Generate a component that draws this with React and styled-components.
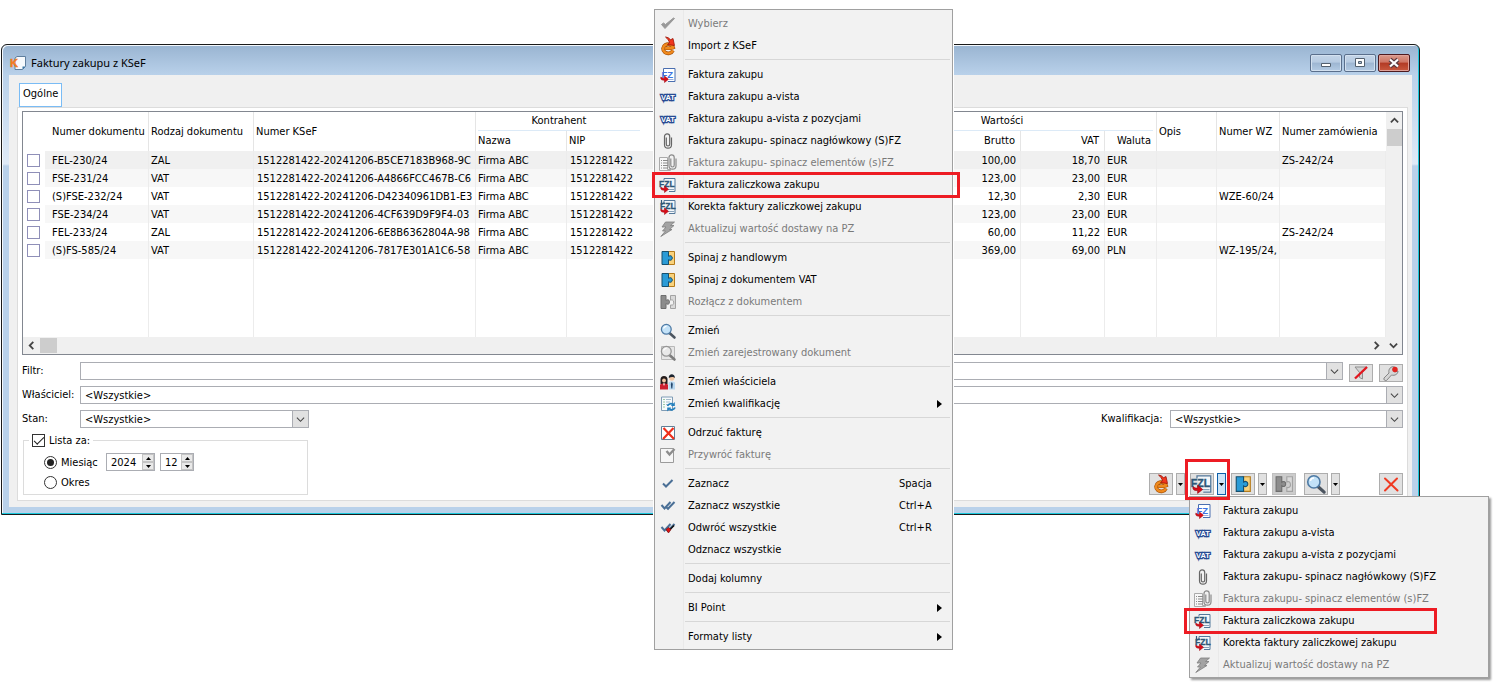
import { useState } from "react";
import styled, { createGlobalStyle } from "styled-components";

const GlobalStyle = createGlobalStyle`
  * {
    box-sizing: border-box;
  }

  body {
    margin: 0;
    background: #fff;
    color: #000;
  }

  body,
  button,
  input,
  select {
    font-family: "DejaVu Sans Condensed", "Noto Sans", sans-serif;
    font-size: 11px;
    line-height: 14px;
  }
`;

const Page = styled.div`
  position: relative;
  min-height: 100vh;
  padding: 44px 74px 0 1px;
`;

const Window = styled.div`
  border: 1px solid #1a1a1a;
  border-radius: 6px 6px 0 0;
  box-shadow: inset -1px -1px 0 #19c8dc, inset 1px 1px 0 #f4f8fc;
  background: linear-gradient(#99b4d1 0, #b9d1ea 30px, #dfeaf7 119px, #b9d1ea 121px);
  padding: 0 7px 7px;
`;

const TitleBar = styled.div`
  display: flex;
  align-items: center;
  gap: 4px;
  height: 30px;
  padding: 6px 2px 0;
`;

const Title = styled.h1`
  flex: 1;
  margin: 0;
  font-size: 11px;
  font-weight: 400;
  font-family: "Noto Sans", sans-serif;
`;

const WindowButtons = styled.div`
  display: flex;
  gap: 2px;
`;

const WindowButton = styled.button`
  display: flex;
  align-items: center;
  justify-content: center;
  width: 32px;
  height: 18px;
  padding: 0;
  border: 1px solid ${(props) => (props.$close ? "#4d1a1f" : "#5a6f8c")};
  border-radius: 2px;
  box-shadow: inset 0 0 0 1px ${(props) => (props.$close ? "#e0a199" : "#d3e1f0")};
  background: ${(props) =>
    props.$close
      ? "linear-gradient(#d99a8c 0, #cf7463 45%, #b23a24 50%, #c9593f 100%)"
      : "linear-gradient(#c4d5e8 0, #b7cbe2 45%, #9db6d2 50%, #b4cbe4 100%)"};
`;

const Content = styled.div`
  background: #f0f0f0;
  padding: 8px 4px 6px 8px;
`;

const Tab = styled.button`
  display: block;
  height: 24px;
  margin-left: 2px;
  padding: 0 3px 3px;
  border: 1px solid #7abcf5;
  background: #fff;
`;

const Panel = styled.div`
  border: 1px solid #dcdcdc;
  background: #fff;
  padding: 3px 4px 5px;
`;

const Grid = styled.div`
  border: 1px solid #828790;
  background: #fff;
`;

const GridBody = styled.div`
  display: flex;
`;

const Table = styled.table`
  flex: 1;
  width: 0;
  table-layout: fixed;
  border-collapse: separate;
  border-spacing: 0;
`;

const Th = styled.th`
  height: ${(props) => (props.$group ? "19px" : "20px")};
  padding: 0 5px 0 ${(props) => props.$left || 2}px;
  border-right: 1px solid ${(props) => (props.$open ? "transparent" : "#e5e5e5")};
  font-weight: 400;
  text-align: ${(props) => props.$align || "left"};
  white-space: nowrap;
`;

const GroupTitle = styled.div`
  height: 19px;
  line-height: 18px;
  border-bottom: 1px solid #dceaf7;
  margin-right: -2px;
`;

const Td = styled.td`
  height: 18px;
  padding: 2px ${(props) => (props.$align ? 4 : 0)}px 0 ${(props) => props.$left || 2}px;
  border-right: 1px solid ${(props) => (props.$open ? "transparent" : "#ececec")};
  background: ${(props) => props.$bg || "#fff"};
  text-align: ${(props) => props.$align || "left"};
  white-space: nowrap;
  overflow: hidden;
`;

const FillTd = styled(Td)`
  height: 78px;
`;

const CheckTd = styled.td`
  padding: 0 0 0 4px;
`;

const RowCheck = styled.input`
  appearance: none;
  display: block;
  width: 13px;
  height: 13px;
  margin: 0;
  border: 1px solid #8f8fb8;
  background: #fff;

  &:checked {
    background: #8f8fb8;
  }
`;

const ScrollColumn = styled.div`
  display: flex;
  flex-direction: column;
  align-items: center;
  width: 16px;
  background: #f0f0f0;
`;

const ScrollRow = styled.div`
  display: flex;
  align-items: center;
  height: 17px;
  background: #f0f0f0;
`;

const ScrollButton = styled.button`
  display: flex;
  align-items: center;
  justify-content: center;
  width: 17px;
  height: 17px;
  padding: 0;
  border: none;
  background: transparent;
`;

const Thumb = styled.div`
  width: ${(props) => (props.$wide ? 17 : 15)}px;
  height: ${(props) => (props.$wide ? 15 : 17)}px;
  background: #cdcdcd;
`;

const Spacer = styled.div`
  flex: 1;
`;

const Form = styled.div`
  display: flex;
  flex-direction: column;
  gap: 6px;
  margin-top: 7px;
`;

const FormRow = styled.div`
  display: flex;
  gap: 6px;
  height: 18px;
`;

const Field = styled.div`
  display: flex;
  flex: ${(props) => (props.$width ? "none" : 1)};
`;

const FieldLabel = styled.label`
  width: ${(props) => props.$width}px;
  line-height: 17px;
`;

const Combo = styled.div`
  display: grid;
  grid-template-columns: 1fr 17px;
  flex: ${(props) => (props.$width ? "none" : 1)};
  width: ${(props) => (props.$width ? props.$width + "px" : "auto")};
  height: 18px;
`;

const Select = styled.select`
  appearance: none;
  grid-area: 1 / 1 / 2 / 3;
  min-width: 0;
  height: 18px;
  padding: 1px 20px 0 4px;
  border: 1px solid #abadb3;
  border-radius: 0;
  background: #fff;
  color: #000;
`;

const ComboArrow = styled.span`
  grid-area: 1 / 2;
  display: flex;
  align-items: center;
  justify-content: center;
  border: 1px solid #abadb3;
  background: #e1e1e1;
  pointer-events: none;
`;

const ToolButton = styled.button`
  display: flex;
  align-items: center;
  justify-content: center;
  width: 24px;
  height: ${(props) => (props.$small ? 18 : 22)}px;
  margin: ${(props) => (props.$small ? "2px 0 0" : "0")};
  padding: 0;
  border: 1px solid ${(props) => (props.disabled ? "#bfbfbf" : "#adadad")};
  background: ${(props) => (props.disabled ? "#cccccc" : "#e1e1e1")};
`;

const DropButton = styled(ToolButton)`
  width: 9px;
  border-color: ${(props) => (props.$active ? "#0e5fa8" : "#adadad")};
  background: ${(props) => (props.$active ? "#cce4f7" : "#e1e1e1")};
`;

const Footer = styled.div`
  display: flex;
  justify-content: space-between;
  align-items: flex-end;
  margin-top: 6px;
`;

const Period = styled.fieldset`
  width: 285px;
  margin: 0 0 0 1px;
  padding: 6px 0 3px 20px;
  border: 1px solid #dcdcdc;
`;

const Legend = styled.legend`
  margin-left: -15px;
  padding: 0 3px;
  height: 13px;
`;

const OptionLabel = styled.label`
  display: flex;
  align-items: center;
  gap: 4px;
  width: ${(props) => (props.$width ? props.$width + "px" : "auto")};
  height: ${(props) => props.$height || 20}px;
`;

const OptionRow = styled.div`
  display: flex;
  align-items: center;
  gap: 5px;
  height: 18px;

  & + & {
    margin-top: 2px;
  }
`;

const OptionText = styled.span`
  padding-top: 2px;
`;

const CheckBox = styled.input`
  appearance: none;
  display: grid;
  place-items: center;
  width: 13px;
  height: 13px;
  margin: 0;
  border: 1px solid #333;
  background: #fff;

  &:checked::before {
    content: "";
    width: 9px;
    height: 4px;
    margin-top: -3px;
    border-left: 1px solid #222;
    border-bottom: 1px solid #222;
    transform: rotate(-45deg);
  }
`;

const Radio = styled(CheckBox)`
  border-radius: 50%;

  &:checked::before {
    width: 7px;
    height: 7px;
    margin: 0;
    border: none;
    border-radius: 50%;
    background: #222;
    transform: none;
  }
`;

const SpinBox = styled.div`
  display: flex;
  width: ${(props) => props.$width}px;
  height: 18px;
  border: 1px solid #abadb3;
  background: #fff;
`;

const SpinInput = styled.input`
  appearance: textfield;
  flex: 1;
  width: 0;
  padding: 2px 0 0 4px;
  border: none;
  background: transparent;

  &::-webkit-inner-spin-button {
    appearance: none;
    margin: 0;
  }
`;

const SpinButtons = styled.div`
  display: flex;
  flex-direction: column;
  width: 12px;
`;

const SpinButton = styled.button`
  display: flex;
  align-items: center;
  justify-content: center;
  height: 8px;
  padding: 0;
  border: 1px solid #c4c4c4;
  background: #e9e9e9;
`;

const Toolbar = styled.div`
  display: flex;
  gap: 5px;
`;

const Split = styled.div`
  display: flex;
  gap: 3px;
  position: relative;
  margin-left: ${(props) => (props.$apart ? 3 : 0)}px;
`;

const CloseSlot = styled.div`
  margin-left: 34px;
`;

const ButtonMark = styled.div`
  position: absolute;
  z-index: 3;
  top: -14px;
  left: -5px;
  width: 45px;
  height: 41px;
  border: 3px solid #ed1c24;
  pointer-events: none;
`;

const Menu = styled.ul`
  position: absolute;
  z-index: 2;
  width: 299px;
  margin: 0;
  padding: 2px;
  border: 1px solid #a0a0a0;
  background: linear-gradient(to right, #f1f1f1 28px, #e9e9e9 28px, #e9e9e9 29px, #f2f2f2 29px);
  list-style: none;
`;

const ContextMenu = styled(Menu)`
  top: 9px;
  left: 654px;
  box-shadow: 0 0 0 1px #fff;
`;

const DropMenu = styled(Menu)`
  top: 23px;
  left: -1px;
  width: 300px;
  box-shadow: 2px 2px 2px rgba(0, 0, 0, 0.4);
`;

const MenuItem = styled.li`
  position: relative;
`;

const MenuButton = styled.button`
  display: grid;
  grid-template-columns: 16px 1fr auto 10px;
  column-gap: 12px;
  align-items: center;
  width: 100%;
  height: 22px;
  padding: 2px 3px 0;
  border: none;
  background: transparent;
  color: ${(props) => (props.disabled ? "#7a7a7a" : "#000")};
  text-align: left;
  white-space: nowrap;

  &:hover:enabled {
    background: #cfe4f7;
  }
`;

const Shortcut = styled.span`
  width: 40px;
  margin-right: -14px;
`;

const IconSlot = styled.span`
  display: flex;
  justify-content: center;
  line-height: 0;
`;

const Separator = styled.li`
  height: 7px;
  padding-top: 3px;
  padding-left: 28px;

  &::before {
    content: "";
    display: block;
    height: 1px;
    background: #d7d7d7;
  }
`;

const ItemMark = styled.div`
  position: absolute;
  z-index: 3;
  top: -1px;
  left: ${(props) => (props.$wide ? -5 : -8)}px;
  width: ${(props) => (props.$wide ? 308 : 253)}px;
  height: 26px;
  border: 3px solid #ed1c24;
  pointer-events: none;
`;

/* ---- icons ---- */

const Svg = ({ size = 16, children }) => (
  <svg width={size} height={size} viewBox="0 0 16 16" fill="none" overflow="visible" aria-hidden="true">
    {children}
  </svg>
);

const Chevron = ({ dir = "down", color = "#444", width = 1.2 }) => {
  const paths = {
    down: "M1 3l4 4 4-4",
    up: "M1 7l4-4 4 4",
    left: "M7 1L3 5l4 4",
    right: "M3 1l4 4-4 4",
  };
  return (
    <svg width="9" height="9" viewBox="0 0 10 10" fill="none" aria-hidden="true">
      <path d={paths[dir]} stroke={color} strokeWidth={width} />
    </svg>
  );
};

const Caret = ({ dir = "down" }) => {
  const paths = { down: "M0 0h5L2.5 3z", up: "M0 3h5L2.5 0z" };
  return (
    <svg width="5" height="3" viewBox="0 0 5 3" aria-hidden="true">
      <path d={paths[dir]} fill="#000" />
    </svg>
  );
};

const SubmenuArrow = () => (
  <svg width="5" height="8" viewBox="0 0 5 8" aria-hidden="true">
    <path d="M0 0v8l5-4z" fill="#000" />
  </svg>
);

const AppIcon = () => (
  <Svg>
    <path d="M6 1.500h8.500v10l-3 3H4V3z" fill="#f6fafd" stroke="#5f7f9e" />
    <path d="M14.500 11.500h-3v3z" fill="#3b79a8" />
    <text x="-1" y="12" fontSize="11" fontWeight="700" fontFamily="Liberation Sans, sans-serif" fill="#f47b20" stroke="#f47b20" strokeWidth=".5">K</text>
  </Svg>
);

const Tick = ({ color }) => (
  <Svg>
    <path d="M1.500 8.500l3.500 4L14.500 2.500l-1-.5L5.500 8.500 3.500 7z" fill={color} stroke={color} />
  </Svg>
);

const SmallTick = () => (
  <Svg>
    <path d="M3 7.500l3 3 6.500-6.500" stroke="#4a6f96" strokeWidth="2" />
  </Svg>
);

const DoubleTick = ({ red }) => (
  <Svg>
    <path d="M1.500 7l3 3.500 6-6.500M6 9l2 1.800L14.500 4" stroke="#4a6f96" strokeWidth="2" />
    {red && (
      <>
        <path d="M8 11.500l6-6" stroke="#111" strokeWidth="1.600" />
        <path d="M6 9.500l2.500-2 2.500 2-2.500 3.500z" fill="#e01212" stroke="#6d0a0a" strokeWidth=".6" />
      </>
    )}
  </Svg>
);

const ImportIcon = ({ size }) => (
  <Svg size={size}>
    <path d="M13 12.500A5.200 4.600 0 1 1 13.200 9.500c-2 .7-5 .9-8 .7" stroke="#a34d05" strokeWidth="3.600" />
    <path d="M13 12.500A5.200 4.600 0 1 1 13.200 9.500c-2 .7-5 .9-8 .7" stroke="#f08a1d" strokeWidth="2.400" />
    <path d="M5.500-1c2 .2 4 1.200 5 2.800l2.500-1.300 1.500 7L7.500 6.500l2-1.700C9 2.500 7.500.8 5.500-1z" fill="#f1371e" stroke="#9c1408" strokeWidth=".8" />
  </Svg>
);

const RedArrow = () => (
  <path d="M.8 10v1.800c.5 1.200 1.700 1.500 3.700 1.400V15.500L8.500 12.300 4.500 9v2.200C3 11.300 2 11.200.8 10z" fill="#d90b17" stroke="#98000a" strokeWidth=".5" />
);

const FzIcon = () => (
  <Svg>
    <path d="M3.500 8V1.500H15v13H8" fill="#fff" stroke="#4a6fb0" />
    <path d="M9 12.500h4.500" stroke="#9ab0dc" />
    <text x="1.500" y="10.500" fontSize="9.500" fontWeight="700" fontFamily="Liberation Sans, sans-serif" fill="#3d73e0">FZ</text>
    <RedArrow />
  </Svg>
);

const FzlIcon = ({ size, correction }) => (
  <Svg size={size}>
    <path d="M4 3.500V1.500h11v13H9" fill="#f4f7fa" stroke="#54789a" />
    <path d="M8 12.500h6" stroke="#8aa3ba" />
    <text x={correction ? 0 : -1} y="10.300" fontSize="8.500" fontWeight="700" fontFamily="Liberation Sans, sans-serif" fill="#2f5878" stroke="#2f5878" strokeWidth=".3">FZL</text>
    {correction && <path d="M1.500 1v4.500l3-2" stroke="#2f5878" strokeWidth="1.200" />}
    <RedArrow />
  </Svg>
);

const VatIcon = () => (
  <Svg>
    <text x="8" y="11" textAnchor="middle" fontSize="7.500" fontWeight="700" fontFamily="Liberation Sans, sans-serif" fill="#fff" stroke="#274b94" strokeWidth="2.400" paintOrder="stroke">
      VAT
    </text>
  </Svg>
);

const ClipPath = ({ color }) => (
  <path d="M6.300 4.500v6.800a1.700 1.700 0 0 0 3.400 0V3.500a2.600 2.600 0 0 0-5.200 0v8.200a3.500 3.500 0 0 0 7 0V4.500" stroke={color} strokeWidth="1.200" />
);

const ClipIcon = () => (
  <Svg>
    <ClipPath color="#666" />
  </Svg>
);

const ClipListIcon = () => (
  <Svg>
    <path d="M-.5 2.500h8v12h3v1h-11z" fill="#f7f7f7" stroke="#aaa" />
    <path d="M1 5.500h1M3 5.500h5M1 8h1M3 8h5M1 10.500h1M3 10.500h5M1 13h1M3 13h5" stroke="#8a8a8a" />
    <g transform="translate(4.500 -1)">
      <ClipPath color="#8a8a8a" />
    </g>
  </Svg>
);

const BoltIcon = () => (
  <Svg>
    <path d="M5.500 1h9l-4 3.500h3.500L9.500 8.500H12L.8 15.500 5.500 10H2.500L6 6H2z" fill="#a3a3a3" stroke="#7d7d7d" strokeWidth=".8" />
  </Svg>
);

const PuzzleIcon = ({ size, gray }) => (
  <Svg size={size}>
    {gray ? (
      <>
        <path d="M1 1.500h5V6.500C8 5 9.500 6 9.500 8S8 11 6 9.500v5H1z" fill="#8c8c8c" stroke="#6e6e6e" />
        <path d="M10.500 1.500h5v13h-5v-3.500c3 .8 3.500-1.500 3.200-3-.3-2-1.700-2.500-3.200-1.800z" fill="#d9d9d9" stroke="#a3a3a3" />
      </>
    ) : (
      <>
        <path d="M8 1.500h6.500v13H8z" fill="#f9d27c" stroke="#b57c1c" />
        <path d="M2 1.500h6.500v4.800C10.500 5 12.300 6 12.300 8s-1.800 3-3.800 1.700v4.800H2z" fill="#2a9bd6" stroke="#17506f" />
      </>
    )}
  </Svg>
);

const LensIcon = ({ size, gray }) => (
  <Svg size={size}>
    {gray && <path d="M1.500 1.500h13v13h-13z" fill="#e6e6e6" stroke="#b8b8b8" />}
    <path d="M9.500 10l5 4.500" stroke={gray ? "#7c7c7c" : "#4c5560"} strokeWidth="2.600" strokeLinecap="round" />
    <circle cx="6.300" cy="6.300" r="4.900" fill={gray ? "#e9e9e9" : "#c3e2f8"} stroke={gray ? "#969696" : "#4f7ba5"} strokeWidth="1.300" />
    <path d="M3.500 5.500a3 3 0 0 1 3-2.200" stroke="#fff" strokeWidth="1.200" />
  </Svg>
);

const PeopleIcon = () => (
  <Svg>
    <path d="M.5 10V5.500a3.500 3.500 0 0 1 7 0V10z" fill="#241b1b" />
    <circle cx="4" cy="6.500" r="1.900" fill="#f2c7a4" />
    <path d="M0 15.500V11c0-2 8-2 8 0v4.500z" fill="#cc1f2f" />
    <path d="M3 9.500l1 2.500 1-2.500z" fill="#fff" />
    <circle cx="11.800" cy="4" r="2.700" fill="#f2c7a4" />
    <path d="M8.800 4c-.5-5 6.500-5 6 0-1-1.500-4-1.500-6 0z" fill="#1b2430" />
    <path d="M8.500 15.500V9c0-2 6.500-2 6.500 0v6.500z" fill="#b8d8f0" />
    <path d="M11.800 8l1 2-.5 4.500h-1l-.5-4.500z" fill="#24466b" />
  </Svg>
);

const QualifyIcon = () => (
  <Svg>
    <path d="M1.500 1h11v13.500h-11z" fill="#f7fafc" stroke="#7f9cb5" />
    <path d="M3.500 3.500h1M3.500 6h1M3.500 8.500h1M3.500 11h1" stroke="#3f9a4d" />
    <path d="M6 3.500h5M6 6h4M6 8.500h2" stroke="#a7bccc" />
    <path d="M7.500 10c1-2.500 4-3 5.700-1.200M15 11.500c-1 2.500-4 3-5.700 1.200" stroke="#2580bd" strokeWidth="1.800" />
    <path d="M14.800 6v4h-4zM7.200 15.500v-4h4z" fill="#2580bd" />
  </Svg>
);

const RejectIcon = () => (
  <Svg>
    <path d="M1.500 1.500h13v13h-13z" fill="#fff" stroke="#5f8098" />
    <path d="M3.500 3l10.500 11M13.500 3L3 14" stroke="#ee2f1b" strokeWidth="2.200" />
  </Svg>
);

const RestoreIcon = () => (
  <Svg>
    <path d="M.5 1.500h13v14H.5z" fill="#f6f6f6" stroke="#9b9b9b" />
    <path d="M6.500 4l3 3.500L14.500 2" stroke="#8d8d8d" strokeWidth="2.400" />
  </Svg>
);

const CrossIcon = () => (
  <Svg>
    <path d="M2 2.500l12.500 12M14 2.500L2 14.500" stroke="#f03a22" strokeWidth="2" strokeLinecap="round" />
  </Svg>
);

const NoFilterIcon = () => (
  <Svg>
    <path d="M2 2h12L9.500 7.500V14l-3-1.500v-5z" fill="#d2d2d2" stroke="#8f8f8f" />
    <path d="M2 13.500L14 2" stroke="#e3171f" strokeWidth="2.400" />
  </Svg>
);

const WrenchIcon = () => (
  <Svg>
    <path d="M1 13l5-5C5 4 8 1 11.500 1.800L9.500 4.500l2 2.500L15 6c0 3-3 5-6.500 4L3.500 15.500C1.500 16 .5 14.500 1 13z" fill="#d5d5d5" stroke="#858585" />
    <circle cx="12" cy="4.500" r="2.700" fill="#e3241f" />
  </Svg>
);

const MinimizeIcon = () => (
  <Svg>
    <path d="M3.500 8.500h9v3h-9z" fill="#fff" stroke="#53606f" />
  </Svg>
);

const MaximizeIcon = () => (
  <Svg>
    <path d="M3.500 3.500h9v8h-9z" fill="#fff" stroke="#53606f" />
    <path d="M6.500 6.500h3v2h-3z" fill="#a9bfd8" stroke="#53606f" />
  </Svg>
);

const CloseIcon = () => (
  <Svg>
    <path d="M4 4.500l8 7M12 4.500l-8 7" stroke="#5a3a40" strokeWidth="4.400" />
    <path d="M4 4.500l8 7M12 4.500l-8 7" stroke="#fff" strokeWidth="2.200" />
  </Svg>
);

/* ---- data ---- */

const rows = [
  { doc: "FEL-230/24", type: "ZAL", ksef: "1512281422-20241206-B5CE7183B968-9C", gross: "100,00", vat: "18,70", cur: "EUR", order: "ZS-242/24" },
  { doc: "FSE-231/24", type: "VAT", ksef: "1512281422-20241206-A4866FCC467B-C6", gross: "123,00", vat: "23,00", cur: "EUR" },
  { doc: "(S)FSE-232/24", type: "VAT", ksef: "1512281422-20241206-D42340961DB1-E3", gross: "12,30", vat: "2,30", cur: "EUR", wz: "WZE-60/24" },
  { doc: "FSE-234/24", type: "VAT", ksef: "1512281422-20241206-4CF639D9F9F4-03", gross: "123,00", vat: "23,00", cur: "EUR" },
  { doc: "FEL-233/24", type: "ZAL", ksef: "1512281422-20241206-6E8B6362804A-98", gross: "60,00", vat: "11,22", cur: "EUR", order: "ZS-242/24" },
  { doc: "(S)FS-585/24", type: "VAT", ksef: "1512281422-20241206-7817E301A1C6-58", gross: "369,00", vat: "69,00", cur: "PLN", wz: "WZ-195/24," },
];

const rowColor = (index) => {
  if (index === 0) return "#f0f0f0";
  return index % 2 ? "#f7f7f7" : "#fff";
};

const columnWidths = [22, 104, 105, 222, 91, 77, null, 86, 86, 84, 52, 60, 63, 106];
const NIP_COLUMN = 5;

const invoiceItems = [
  { label: "Faktura zakupu", icon: <FzIcon /> },
  { label: "Faktura zakupu a-vista", icon: <VatIcon /> },
  { label: "Faktura zakupu a-vista z pozycjami", icon: <VatIcon /> },
  { label: "Faktura zakupu- spinacz nagłówkowy (S)FZ", icon: <ClipIcon /> },
  { label: "Faktura zakupu- spinacz elementów (s)FZ", icon: <ClipListIcon />, disabled: true },
  { label: "Faktura zaliczkowa zakupu", icon: <FzlIcon />, marked: true },
  { label: "Korekta faktury zaliczkowej zakupu", icon: <FzlIcon correction /> },
  { label: "Aktualizuj wartość dostawy na PZ", icon: <BoltIcon />, disabled: true },
];

const contextItems = [
  { label: "Wybierz", icon: <Tick color="#999" />, disabled: true },
  { label: "Import z KSeF", icon: <ImportIcon /> },
  null,
  ...invoiceItems,
  null,
  { label: "Spinaj z handlowym", icon: <PuzzleIcon /> },
  { label: "Spinaj z dokumentem VAT", icon: <PuzzleIcon /> },
  { label: "Rozłącz z dokumentem", icon: <PuzzleIcon gray />, disabled: true },
  null,
  { label: "Zmień", icon: <LensIcon /> },
  { label: "Zmień zarejestrowany dokument", icon: <LensIcon gray />, disabled: true },
  null,
  { label: "Zmień właściciela", icon: <PeopleIcon /> },
  { label: "Zmień kwalifikację", icon: <QualifyIcon />, submenu: true },
  null,
  { label: "Odrzuć fakturę", icon: <RejectIcon /> },
  { label: "Przywróć fakturę", icon: <RestoreIcon />, disabled: true },
  null,
  { label: "Zaznacz", icon: <SmallTick />, shortcut: "Spacja" },
  { label: "Zaznacz wszystkie", icon: <DoubleTick />, shortcut: "Ctrl+A" },
  { label: "Odwróć wszystkie", icon: <DoubleTick red />, shortcut: "Ctrl+R" },
  { label: "Odznacz wszystkie" },
  null,
  { label: "Dodaj kolumny" },
  null,
  { label: "BI Point", submenu: true },
  null,
  { label: "Formaty listy", submenu: true },
];

const MenuItems = ({ items, wide }) =>
  items.map((item, index) =>
    item ? (
      <MenuItem key={item.label} role="none">
        <MenuButton role="menuitem" disabled={item.disabled}>
          <IconSlot>{item.icon}</IconSlot>
          <span>{item.label}</span>
          {item.shortcut ? <Shortcut>{item.shortcut}</Shortcut> : <span />}
          {item.submenu && <SubmenuArrow />}
        </MenuButton>
        {item.marked && <ItemMark $wide={wide} />}
      </MenuItem>
    ) : (
      <Separator key={index} role="separator" />
    )
  );

const ComboBox = ({ id, width, options = [""] }) => (
  <Combo $width={width}>
    <Select id={id}>
      {options.map((option) => (
        <option key={option}>{option}</option>
      ))}
    </Select>
    <ComboArrow>
      <Chevron />
    </ComboArrow>
  </Combo>
);

const Spinner = ({ label, value, onChange, width }) => (
  <SpinBox $width={width}>
    <SpinInput type="number" aria-label={label} value={value} onChange={(e) => onChange(Number(e.target.value))} />
    <SpinButtons>
      <SpinButton aria-label={label + " +"} onClick={() => onChange(value + 1)}>
        <Caret dir="up" />
      </SpinButton>
      <SpinButton aria-label={label + " -"} onClick={() => onChange(value - 1)}>
        <Caret />
      </SpinButton>
    </SpinButtons>
  </SpinBox>
);

const Invoices = () => (
  <Table>
    <colgroup>
      {columnWidths.map((width, index) => (
        <col key={index} width={width || undefined} />
      ))}
    </colgroup>
    <thead>
      <tr>
        <Th rowSpan={2} $open />
        <Th rowSpan={2} $left={7}>Numer dokumentu</Th>
        <Th rowSpan={2}>Rodzaj dokumentu</Th>
        <Th rowSpan={2}>Numer KSeF</Th>
        <Th colSpan={2} $group $open $align="center">
          <GroupTitle>Kontrahent</GroupTitle>
        </Th>
        <Th rowSpan={2} />
        <Th colSpan={4} $group $align="center">
          <GroupTitle>Wartości</GroupTitle>
        </Th>
        <Th rowSpan={2}>Opis</Th>
        <Th rowSpan={2}>Numer WZ</Th>
        <Th rowSpan={2} $open>Numer zamówienia</Th>
      </tr>
      <tr>
        <Th>Nazwa</Th>
        <Th $open>NIP</Th>
        <Th />
        <Th $align="right">Brutto</Th>
        <Th $align="right">VAT</Th>
        <Th $align="right">Waluta</Th>
      </tr>
    </thead>
    <tbody>
      {rows.map((row, index) => {
        const bg = rowColor(index);
        return (
          <tr key={row.doc}>
            <CheckTd>
              <RowCheck type="checkbox" aria-label={row.doc} />
            </CheckTd>
            <Td $bg={bg} $left={7}>{row.doc}</Td>
            <Td $bg={bg}>{row.type}</Td>
            <Td $bg={bg} $left={3}>{row.ksef}</Td>
            <Td $bg={bg}>Firma ABC</Td>
            <Td $bg={bg} $left={3} $open>1512281422</Td>
            <Td $bg={bg} />
            <Td $bg={bg} />
            <Td $bg={bg} $align="right">{row.gross}</Td>
            <Td $bg={bg} $align="right">{row.vat}</Td>
            <Td $bg={bg}>{row.cur}</Td>
            <Td $bg={bg} />
            <Td $bg={bg}>{row.wz}</Td>
            <Td $bg={bg}>{row.order}</Td>
          </tr>
        );
      })}
      <tr>
        <td />
        {columnWidths.slice(1).map((width, index) => (
          <FillTd key={index} $open={index + 1 === NIP_COLUMN} />
        ))}
      </tr>
    </tbody>
  </Table>
);

const App = () => {
  const [year, setYear] = useState(2024);
  const [month, setMonth] = useState(12);

  return (
    <Page>
      <GlobalStyle />
      <Window>
        <TitleBar>
          <AppIcon />
          <Title>Faktury zakupu z KSeF</Title>
          <WindowButtons>
            <WindowButton aria-label="Minimalizuj">
              <MinimizeIcon />
            </WindowButton>
            <WindowButton aria-label="Maksymalizuj">
              <MaximizeIcon />
            </WindowButton>
            <WindowButton $close aria-label="Zamknij">
              <CloseIcon />
            </WindowButton>
          </WindowButtons>
        </TitleBar>
        <Content>
          <Tab>Ogólne</Tab>
          <Panel>
            <Grid>
              <GridBody>
                <Invoices />
                <ScrollColumn>
                  <ScrollButton aria-label="W górę">
                    <Chevron dir="up" width={2} />
                  </ScrollButton>
                  <Thumb />
                </ScrollColumn>
              </GridBody>
              <ScrollRow>
                <ScrollButton aria-label="W lewo">
                  <Chevron dir="left" width={2} />
                </ScrollButton>
                <Thumb $wide />
                <Spacer />
                <ScrollButton aria-label="W prawo">
                  <Chevron dir="right" width={2} />
                </ScrollButton>
                <ScrollButton aria-label="W dół">
                  <Chevron width={2} />
                </ScrollButton>
              </ScrollRow>
            </Grid>
            <Form>
              <FormRow>
                <Field>
                  <FieldLabel htmlFor="filter" $width={58}>Filtr:</FieldLabel>
                  <ComboBox id="filter" />
                </Field>
                <ToolButton $small aria-label="Wyczyść filtr">
                  <NoFilterIcon />
                </ToolButton>
                <ToolButton $small aria-label="Ustawienia filtra">
                  <WrenchIcon />
                </ToolButton>
              </FormRow>
              <FormRow>
                <Field>
                  <FieldLabel htmlFor="owner" $width={58}>Właściciel:</FieldLabel>
                  <ComboBox id="owner" options={["<Wszystkie>"]} />
                </Field>
              </FormRow>
              <FormRow>
                <Field $width>
                  <FieldLabel htmlFor="state" $width={58}>Stan:</FieldLabel>
                  <ComboBox id="state" width={229} options={["<Wszystkie>"]} />
                </Field>
                <Spacer />
                <Field $width>
                  <FieldLabel htmlFor="qualification" $width={69}>Kwalifikacja:</FieldLabel>
                  <ComboBox id="qualification" width={233} options={["<Wszystkie>"]} />
                </Field>
              </FormRow>
            </Form>
            <Footer>
              <Period>
                <Legend>
                  <OptionLabel $height={13}>
                    <CheckBox type="checkbox" defaultChecked />
                    Lista za:
                  </OptionLabel>
                </Legend>
                <OptionRow>
                  <OptionLabel $width={57}>
                    <Radio type="radio" name="period" defaultChecked />
                    <OptionText>Miesiąc</OptionText>
                  </OptionLabel>
                  <Spinner label="Rok" value={year} onChange={setYear} width={49} />
                  <Spinner label="Miesiąc" value={month} onChange={setMonth} width={34} />
                </OptionRow>
                <OptionRow>
                  <OptionLabel>
                    <Radio type="radio" name="period" />
                    <OptionText>Okres</OptionText>
                  </OptionLabel>
                </OptionRow>
              </Period>
              <Toolbar>
                <Split>
                  <ToolButton aria-label="Import z KSeF">
                    <ImportIcon />
                  </ToolButton>
                  <DropButton aria-label="Import - opcje">
                    <Caret />
                  </DropButton>
                </Split>
                <Split>
                  <ToolButton aria-label="Faktura zaliczkowa zakupu">
                    <FzlIcon size={20} />
                  </ToolButton>
                  <DropButton $active aria-label="Faktura - opcje" aria-haspopup="menu">
                    <Caret />
                  </DropButton>
                  <DropMenu role="menu">
                    <MenuItems items={invoiceItems} />
                  </DropMenu>
                  <ButtonMark />
                </Split>
                <Split>
                  <ToolButton aria-label="Spinaj z handlowym">
                    <PuzzleIcon size={18} />
                  </ToolButton>
                  <DropButton aria-label="Spinaj - opcje">
                    <Caret />
                  </DropButton>
                </Split>
                <ToolButton disabled aria-label="Rozłącz z dokumentem">
                  <PuzzleIcon size={18} gray />
                </ToolButton>
                <Split $apart>
                  <ToolButton aria-label="Zmień">
                    <LensIcon size={20} />
                  </ToolButton>
                  <DropButton aria-label="Zmień - opcje">
                    <Caret />
                  </DropButton>
                </Split>
                <CloseSlot>
                  <ToolButton aria-label="Zamknij okno">
                    <CrossIcon />
                  </ToolButton>
                </CloseSlot>
              </Toolbar>
            </Footer>
          </Panel>
        </Content>
      </Window>
      <ContextMenu role="menu">
        <MenuItems items={contextItems} wide />
      </ContextMenu>
    </Page>
  );
};

export default App;
